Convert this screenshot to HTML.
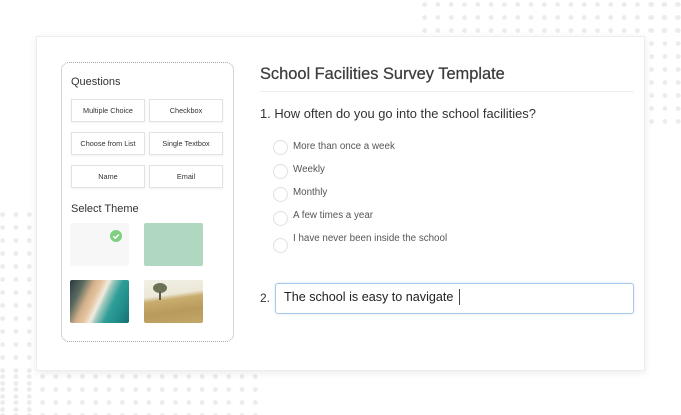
<!DOCTYPE html>
<html><head><meta charset="utf-8"><style>
*{box-sizing:border-box;margin:0;padding:0}
body{width:681px;height:408px;background:#fff;position:relative;overflow:hidden;font-family:"Liberation Sans",Arial,sans-serif;color:#333}
.dots{position:absolute;background-image:radial-gradient(circle,#ececec 2.2px,transparent 2.6px);background-size:13.3px 13px}
.card{position:absolute;left:36px;top:36px;width:609px;height:335px;background:#fff;border:1px solid #ededed;box-shadow:0 2px 8px rgba(0,0,0,.08)}
.panel{position:absolute;left:61px;top:62px;width:173px;height:280px;border:1px dotted #a8a8a8;border-radius:8px}
.abs{position:absolute}
.btn{position:absolute;width:74px;height:23px;border:1px solid #e2e2e2;box-shadow:0 1px 2px rgba(0,0,0,.06);font-size:7.3px;color:#333;text-align:center;line-height:21px;background:#fff}
.h{font-size:11px;color:#333}
.tile{position:absolute;width:59px;height:43px;border-radius:2px;overflow:hidden}
.radio{position:absolute;left:273px;width:15px;height:15px;border:1px solid #e0e0e0;border-radius:50%}
.opt{position:absolute;left:293px;font-size:9.8px;color:#555}
</style></head><body>
<div class="dots" style="left:418px;top:-2px;width:270px;height:38px"></div>
<div class="dots" style="left:645px;top:-2px;width:40px;height:130px"></div>
<div class="dots" style="left:-4px;top:208px;width:40px;height:205px"></div>
<div class="dots" style="left:-4px;top:370px;width:266px;height:45px"></div>
<div class="card"></div>
<div class="panel"></div>
<div class="abs h" style="left:71px;top:76px">Questions</div>
<div class="btn" style="left:71px;top:99px">Multiple Choice</div>
<div class="btn" style="left:149px;top:99px">Checkbox</div>
<div class="btn" style="left:71px;top:132px">Choose from List</div>
<div class="btn" style="left:149px;top:132px">Single Textbox</div>
<div class="btn" style="left:71px;top:165px">Name</div>
<div class="btn" style="left:149px;top:165px">Email</div>
<div class="abs h" style="left:71px;top:203px">Select Theme</div>
<div class="tile" style="left:70px;top:223px;background:#f7f7f7"></div>
<div class="abs" style="left:110px;top:230px;width:12px;height:12px;border-radius:50%;background:#7fcf80"></div>
<svg class="abs" style="left:110px;top:230px" width="12" height="12"><path d="M3.3 6.2l2 2 3.6-3.7" stroke="#fff" stroke-width="1.5" fill="none"/></svg>
<div class="tile" style="left:144px;top:223px;background:#b0d7bf"></div>
<div class="tile" style="left:70px;top:280px;background:linear-gradient(115deg,#2a3a40 0%,#5a6a60 18%,#d4b08a 32%,#e6c7a3 42%,#f0ece0 50%,#9fc8bc 56%,#2f9e98 68%,#1f8a88 85%,#1a6e70 100%)"></div>
<div class="tile" style="left:144px;top:280px;background:linear-gradient(172deg,#f1efe6 0%,#ece8d8 35%,#c9ad6e 45%,#b99a5c 70%,#c2a868 100%)"></div>
<div class="abs" style="left:153px;top:283px;width:14px;height:10px;border-radius:50%;background:#6c7256"></div>
<div class="abs" style="left:159px;top:292px;width:1.5px;height:8px;background:#5a5a48"></div>
<div class="abs" style="left:260px;top:65px;font-size:16.4px;color:#3d3d3d;-webkit-text-stroke:0.25px #3d3d3d">School Facilities Survey Template</div>
<div class="abs" style="left:260px;top:91px;width:374px;height:1px;background:#eee"></div>
<div class="abs" style="left:260px;top:106px;font-size:12.9px;color:#333">1. How often do you go into the school facilities?</div>
<div class="radio" style="top:140px"></div><div class="opt" style="top:141px">More than once a week</div>
<div class="radio" style="top:164px"></div><div class="opt" style="top:164px">Weekly</div>
<div class="radio" style="top:187px"></div><div class="opt" style="top:187px">Monthly</div>
<div class="radio" style="top:211px"></div><div class="opt" style="top:210px">A few times a year</div>
<div class="radio" style="top:238px"></div><div class="opt" style="top:233px">I have never been inside the school</div>
<div class="abs" style="left:260px;top:291px;font-size:12px;color:#333">2.</div>
<div class="abs" style="left:275px;top:283px;width:359px;height:31px;border:1px solid #a7c9ea;border-radius:3px;box-shadow:0 0 2px rgba(120,170,220,.3)"></div>
<div class="abs" style="left:284px;top:290px;font-size:12.6px;color:#222">The school is easy to navigate</div>
<div class="abs" style="left:459px;top:289px;width:1px;height:16px;background:#444"></div>
</body></html>
